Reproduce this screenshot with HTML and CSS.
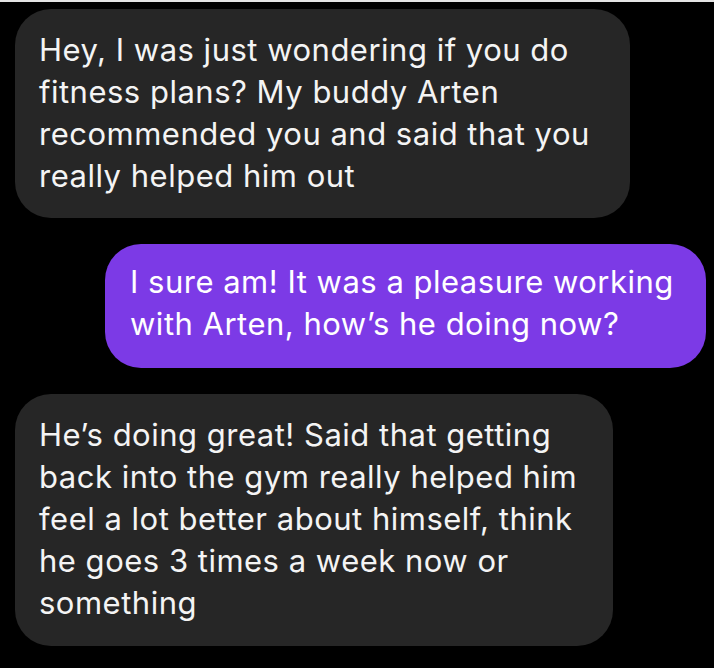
FILE: index.html
```html
<!DOCTYPE html>
<html>
<head>
<meta charset="utf-8">
<link rel="stylesheet" href="styles.css">
</head>
<body>
<div class="topstrip"></div>
<div class="thread">
  <div class="bubble in b1">Hey, I was just wondering if you do<br>fitness plans? My buddy Arten<br>recommended you and said that you<br>really helped him out</div>
  <div class="bubble out b2">I sure am! It was a pleasure working<br>with Arten, how’s he doing now?</div>
  <div class="bubble in b3">He’s doing great! Said that getting<br>back into the gym really helped him<br>feel a lot better about himself, think<br>he goes 3 times a week now or<br>something</div>
</div>
</body>
</html>
```

FILE: styles.css
```css
html, body {
  margin: 0;
  padding: 0;
  background: #000;
  width: 714px;
  height: 668px;
  overflow: hidden;
}
.topstrip {
  height: 2px;
  background: #e4e4e4;
}
.thread {
  display: flex;
  flex-direction: column;
  padding-top: 7px;
  gap: 26px;
}
.bubble {
  box-sizing: border-box;
  font-family: "Inter", "Liberation Sans", Arial, sans-serif;
  font-size: 31px;
  letter-spacing: 0.5px;
  line-height: 42px;
  color: #f4f4f4;
  white-space: nowrap;
  border-radius: 36px;
}
.in {
  background: #262626;
  margin-left: 15px;
  align-self: flex-start;
  padding: 20px 20px 21px 24px;
}
.out {
  background: #7c3ae6;
  align-self: flex-end;
  margin-right: 8px;
  padding: 17px 20px 23px 25px;
  color: #ffffff;
}
.b1 { width: 615px; }
.b2 { width: 601px; }
.b3 { width: 598px; padding-bottom: 22px; }
```
